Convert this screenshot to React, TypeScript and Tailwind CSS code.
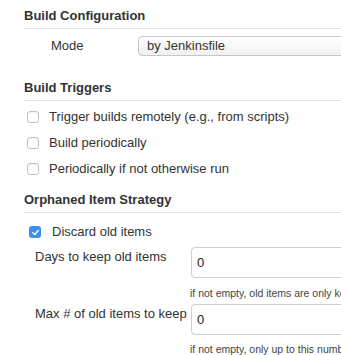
import React from "react";

function Heading({ title, mt }: { title: string; mt: string }) {
  return (
    <div className={mt}>
      <h2 className="h-5 leading-5 font-bold text-[13px] text-[#333]">{title}</h2>
      <div className="mt-[2px] h-px bg-[#e3e3e3]" />
    </div>
  );
}

function Check({ label }: { label: string }) {
  return (
    <div className="flex h-[26px] items-center">
      <span className="ml-[3px] box-border h-3 w-3 shrink-0 rounded-[3px] border border-[#c2c2c2] bg-white shadow-[inset_0_1px_1px_rgba(0,0,0,0.05)]" />
      <span className="ml-[10px] whitespace-nowrap leading-5">{label}</span>
    </div>
  );
}

export default function App() {
  return (
    <div className="h-[355px] w-[341px] overflow-hidden bg-white pl-6 text-[13px] text-[#333] font-['Liberation_Sans',Arial,sans-serif]">
      <Heading title="Build Configuration" mt="pt-[6px]" />
      <div className="mt-[7px] flex h-5 items-center">
        <span className="ml-[27px] w-[87px] shrink-0 leading-5">Mode</span>
        <div className="box-border flex h-5 w-[260px] shrink-0 items-center rounded-[4px] border border-[#c6c6c6] bg-gradient-to-b from-white to-[#f1f1f1] pl-2 leading-5">
          by Jenkinsfile
        </div>
      </div>

      <Heading title="Build Triggers" mt="mt-[22px]" />
      <div className="mt-[3px]">
        <Check label="Trigger builds remotely (e.g., from scripts)" />
        <Check label="Build periodically" />
        <Check label="Periodically if not otherwise run" />
      </div>

      <Heading title="Orphaned Item Strategy" mt="mt-[8px]" />
      <div className="mt-[6px] flex h-[26px] items-center">
        <span className="ml-[5px] flex h-3 w-3 shrink-0 items-center justify-center rounded-[3px] bg-[#3b8ff6]">
          <svg width="9" height="9" viewBox="0 0 10 10" fill="none">
            <path d="M2 5.2 L4.2 7.3 L8 2.8" stroke="white" strokeWidth="1.6" strokeLinecap="round" strokeLinejoin="round" />
          </svg>
        </span>
        <span className="ml-[11px] leading-5">Discard old items</span>
      </div>

      <div className="mt-[2px] flex">
        <span className="ml-[11px] w-[156px] shrink-0 leading-[19px]">Days to keep old items</span>
        <div className="box-border flex h-[31px] w-[200px] shrink-0 items-center rounded-[4px] border border-[#cfcfcf] bg-white pl-[5px] text-[13px] text-[#222]">
          0
        </div>
      </div>
      <div className="mt-[8px] ml-[166px] h-[14px] whitespace-nowrap text-[10.5px] leading-[14px] text-[#444]">
        if not empty, old items are only kept up to this number of days
      </div>

      <div className="mt-[4px] flex">
        <span className="ml-[11px] w-[156px] shrink-0 whitespace-nowrap leading-[19px]">Max # of old items to keep</span>
        <div className="box-border flex h-[31px] w-[200px] shrink-0 items-center rounded-[4px] border border-[#cfcfcf] bg-white pl-[5px] text-[13px] text-[#222]">
          0
        </div>
      </div>
      <div className="mt-[7px] ml-[166px] h-[14px] whitespace-nowrap text-[10.5px] leading-[14px] text-[#444]">
        if not empty, only up to this number of old items are kept
      </div>
    </div>
  );
}
